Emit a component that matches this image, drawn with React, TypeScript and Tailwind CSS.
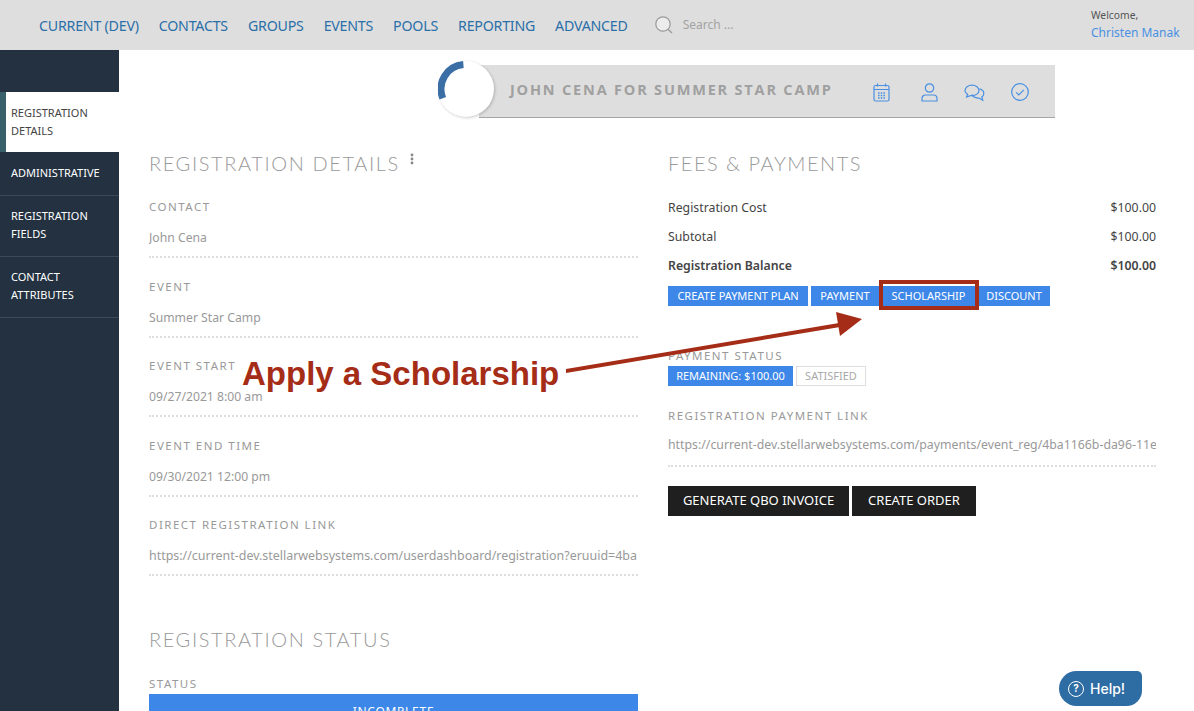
const navItems = ['CURRENT (DEV)', 'CONTACTS', 'GROUPS', 'EVENTS', 'POOLS', 'REPORTING', 'ADVANCED'];

const leftFields = [
    { label: 'CONTACT', value: 'John Cena' },
    { label: 'EVENT', value: 'Summer Star Camp' },
    { label: 'EVENT START', value: '09/27/2021 8:00 am' },
    { label: 'EVENT END TIME', value: '09/30/2021 12:00 pm' },
    { label: 'DIRECT REGISTRATION LINK', value: 'https://current-dev.stellarwebsystems.com/userdashboard/registration?eruuid=4ba1166b-da96-11eb', wide: true },
];

function Field({ label, value, wide }: { label: string; value: string; wide?: boolean }) {
    return (
        <div className="h-[79.5px] pt-[10px]">
            <div className="h-[16px] text-[11.5px] leading-[16px] tracking-[0.13em] text-[#999]">{label}</div>
            <div className={`mt-[13px] h-[20px] overflow-hidden whitespace-nowrap leading-[20px] text-[#999] ${wide ? 'text-[12.45px]' : 'text-[12.2px]'}`}>{value}</div>
            <div className="mt-[8px] border-b-2 border-dotted border-[#ddd]" />
        </div>
    );
}

function SideItem({ lines, active, first }: { lines: string[]; active?: boolean; first?: boolean }) {
    return (
        <div className={active
            ? 'flex h-[60px] flex-col justify-center border-l-[6px] border-[#37606b] bg-white pl-[5px] text-[#444]'
            : `flex flex-col justify-center border-b border-[#3a4a58] pb-[13px] pl-[11px] text-white ${first ? 'pt-[12px]' : 'pt-[11px]'}`}>
            {lines.map(line => (
                <div key={line} className="text-[11px] leading-[18px]">{line}</div>
            ))}
        </div>
    );
}

function CostRow({ label, bold }: { label: string; bold?: boolean }) {
    return (
        <div className={`flex h-[29px] items-center justify-between text-[12.3px] text-[#444] ${bold ? 'font-semibold' : ''}`}>
            <span>{label}</span>
            <span>$100.00</span>
        </div>
    );
}

function BlueTag({ children, className }: { children: string; className: string }) {
    return (
        <span className={`flex h-[20px] items-center justify-center bg-[#3d87e8] text-[11px] text-white ${className}`}>{children}</span>
    );
}

export default function App() {
    return (
        <div className="relative h-[711px] w-[1194px] overflow-hidden bg-white font-['Noto_Sans',sans-serif]">
            {/* Top bar */}
            <header className="flex h-[50px] items-center bg-[#dedede] pl-[39px]">
                <nav className="mt-[2px] flex gap-[20px]">
                    {navItems.map(item => (
                        <span key={item} className="text-[14.2px] tracking-[-0.015em] text-[#2a6fa8]">{item}</span>
                    ))}
                </nav>
                <div className="ml-[27px] flex items-center gap-[10px] text-[12px] text-[#a3a3a3]">
                    <svg width="18" height="18" viewBox="0 0 18 18" fill="none">
                        <circle cx="8" cy="8" r="7.2" fill="#ececec" stroke="#999" strokeWidth="1.2" />
                        <path d="M13 13.2 17 17" stroke="#999" strokeWidth="1.2" />
                    </svg>
                    <span>Search ...</span>
                </div>
                <div className="ml-auto mr-[13px] w-[90px]">
                    <div className="text-[10.3px] leading-[16px] text-[#555]">Welcome,</div>
                    <div className="text-[12px] leading-[20px] text-[#4a90e2]">Christen Manak</div>
                </div>
            </header>

            <div className="flex h-[661px]">
                {/* Sidebar */}
                <aside className="w-[119px] shrink-0 bg-[#233140] pt-[42px]">
                    <SideItem lines={['REGISTRATION', 'DETAILS']} active />
                    <SideItem lines={['ADMINISTRATIVE']} first />
                    <SideItem lines={['REGISTRATION', 'FIELDS']} />
                    <SideItem lines={['CONTACT', 'ATTRIBUTES']} />
                </aside>

                <main className="min-w-0 flex-1">
                    {/* Title banner */}
                    <div className="ml-[360px] mt-[15px] flex h-[53px] w-[576px] items-center border-b border-[#a5a5a5] bg-[#dedede] font-['Open_Sans',sans-serif]">
                        <span className="ml-[31px] pb-[2px] text-[14.5px] font-bold tracking-[0.125em] text-[#a0a0a0]">JOHN CENA FOR SUMMER STAR CAMP</span>
                    </div>

                    <div className="ml-[30px] mt-[33px] flex w-[1007px] gap-[30px]">
                        {/* Left column */}
                        <section className="w-[489px] shrink-0">
                            <h2 className="flex h-[24px] items-start font-['Lato',sans-serif] text-[20px] font-light leading-[24px] tracking-[0.08em] text-[#999]">
                                REGISTRATION DETAILS
                                <svg className="ml-[10px] mt-[2px]" width="4" height="12" viewBox="0 0 4 12" fill="#888">
                                    <circle cx="2" cy="2" r="1.4" />
                                    <circle cx="2" cy="6" r="1.4" />
                                    <circle cx="2" cy="10" r="1.4" />
                                </svg>
                            </h2>
                            <div className="mt-[14px]">
                                {leftFields.map(f => <Field key={f.label} label={f.label} value={f.value} wide={f.wide} />)}
                            </div>
                            <h2 className="mt-[40.5px] h-[24px] font-['Lato',sans-serif] text-[20px] font-light leading-[24px] tracking-[0.08em] text-[#999]">REGISTRATION STATUS</h2>
                            <div className="mt-[25px] text-[11.5px] leading-[16px] tracking-[0.13em] text-[#999]">STATUS</div>
                            <div className="mt-[2px] flex h-[40px] justify-center bg-[#3d87e8] pt-[9px] text-[12px] tracking-[0.06em] text-white">INCOMPLETE</div>
                        </section>

                        {/* Right column */}
                        <section className="w-[488px] shrink-0">
                            <h2 className="h-[24px] font-['Lato',sans-serif] text-[20px] font-light leading-[24px] tracking-[0.075em] text-[#999]">FEES &amp; PAYMENTS</h2>
                            <div className="mt-[19px]">
                                <CostRow label="Registration Cost" />
                                <CostRow label="Subtotal" />
                                <CostRow label="Registration Balance" bold />
                            </div>
                            <div className="mt-[5px] flex">
                                <BlueTag className="w-[140px]">CREATE PAYMENT PLAN</BlueTag>
                                <BlueTag className="ml-[3px] w-[68px]">PAYMENT</BlueTag>
                                <BlueTag className="ml-[2px] w-[95px]">SCHOLARSHIP</BlueTag>
                                <BlueTag className="ml-[2px] w-[72px]">DISCOUNT</BlueTag>
                            </div>
                            <div className="mt-[42px] text-[11.5px] leading-[16px] tracking-[0.13em] text-[#999]">PAYMENT STATUS</div>
                            <div className="mt-[2px] flex">
                                <BlueTag className="w-[125px]">REMAINING: $100.00</BlueTag>
                                <span className="ml-[3px] flex h-[20px] w-[70px] items-center justify-center border border-[#ddd] text-[11px] text-[#aaa]">SATISFIED</span>
                            </div>
                            <div className="mt-[22px] text-[11.5px] leading-[16px] tracking-[0.13em] text-[#999]">REGISTRATION PAYMENT LINK</div>
                            <div className="mt-[11px] h-[20px] overflow-hidden whitespace-nowrap text-[12.3px] leading-[20px] text-[#999]">https://current-dev.stellarwebsystems.com/payments/event_reg/4ba1166b-da96-11eb-a8b3</div>
                            <div className="mt-[10px] border-b-2 border-dotted border-[#ddd]" />
                            <div className="mt-[19px] flex gap-[3px]">
                                <span className="flex h-[30px] w-[181px] items-center justify-center bg-[#1f1f1f] text-[13px] text-white">GENERATE QBO INVOICE</span>
                                <span className="flex h-[30px] w-[124px] items-center justify-center bg-[#1f1f1f] text-[13px] text-white">CREATE ORDER</span>
                            </div>
                        </section>
                    </div>
                </main>
            </div>

            {/* Progress circle over the banner */}
            <div className="absolute left-[438px] top-[61px] h-[56px] w-[56px] rounded-full bg-white shadow-[1px_1px_3px_rgba(0,0,0,0.2)]">
                <svg width="56" height="56" viewBox="0 0 56 56" fill="none">
                    <path d="M25.4 3.6A24.500 24.500 0 0 0 4.800 37.200" stroke="#3a6ea5" strokeWidth="7" />
                </svg>
            </div>

            {/* Banner icons */}
            <svg className="absolute left-[873px] top-[83px]" width="17" height="19" viewBox="0 0 17 19" fill="none" stroke="#4a90e2" strokeWidth="1.2">
                <rect x="1" y="2.500" width="15" height="15.500" rx="1.500" />
                <path d="M1 6.500h15M4.500 0.500v3M12.500 0.500v3" />
                <path d="M5 10h7M5 12.500h7M5 15h7" strokeWidth="1.600" strokeDasharray="1.600 1.100" />
            </svg>
            <svg className="absolute left-[921px] top-[83px]" width="17" height="19" viewBox="0 0 17 19" fill="none" stroke="#4a90e2" strokeWidth="1.2">
                <circle cx="8.500" cy="5" r="4.200" />
                <path d="M4.500 12h8a3.500 3.500 0 0 1 3.500 3.500V18H1v-2.500A3.500 3.500 0 0 1 4.500 12z" />
            </svg>
            <svg className="absolute left-[964px] top-[84px]" width="21" height="18" viewBox="0 0 21 18" fill="none" stroke="#4a90e2" strokeWidth="1.2">
                <path d="M8 1.200c3.800 0 7 2.200 7 5.200s-3.200 5.200-7 5.200H6.400L2.600 13l1-2.700C2 9.400 1 8 1 6.400c0-3 3.200-5.200 7-5.200z" fill="#dedede" />
                <path d="M15.400 4.800c2.500.6 4.400 2.300 4.400 4.600 0 1.500-.8 2.700-2 3.500l.9 3.300-3.800-2.200c-3 .2-6-1-7-3.400" />
            </svg>
            <svg className="absolute left-[1011px] top-[83px]" width="18" height="18" viewBox="0 0 18 18" fill="none" stroke="#4a90e2" strokeWidth="1.2">
                <circle cx="9" cy="9" r="8.300" />
                <path d="M5.200 9.400l2.600 2.500 5-5" />
            </svg>

            {/* Annotation */}
            <div className="absolute left-[879px] top-[280px] h-[30px] w-[100px] border-4 border-[#a52c17]" />
            <span className="absolute left-[242px] top-[354px] font-['Liberation_Sans',sans-serif] text-[33px] font-bold leading-[40px] text-[#a52c17]">Apply a Scholarship</span>
            <svg className="absolute left-[560px] top-[300px]" width="310" height="80" viewBox="0 0 310 80" fill="none">
                <polygon points="6,69 6,73 280,27 279,23" fill="#a52c17" />
                <polygon points="276,12 302,19 280,36" fill="#a52c17" />
            </svg>

            {/* Help tab */}
            <div className="absolute left-[1059px] top-[671px] flex h-[35px] w-[83px] items-center gap-[6px] rounded-bl-[18px] rounded-br-[16px] rounded-tl-[18px] rounded-tr-[5px] bg-[#2e6da4] pl-[9px] font-['Inter',sans-serif] text-[14px] font-medium text-white">
                <span className="flex h-[16px] w-[16px] items-center justify-center rounded-full border border-white text-[10px] font-bold">?</span>
                Help!
            </div>
        </div>
    );
}
